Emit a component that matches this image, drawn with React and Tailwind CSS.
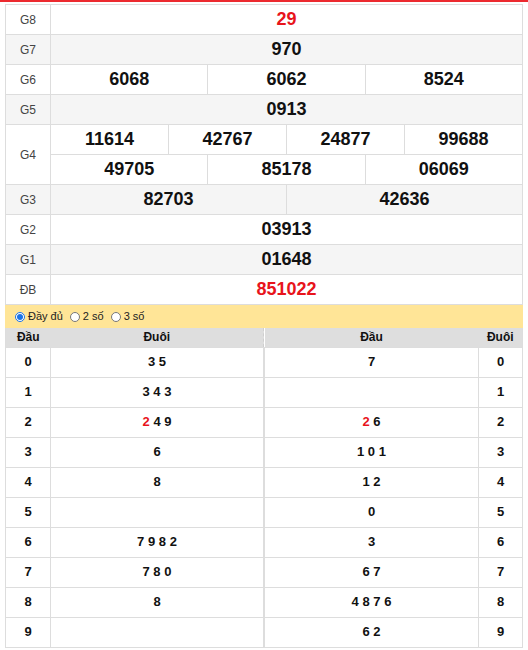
import React from "react";

const RED = "text-[#e8141b]";

function Radio({ checked, label }) {
  return (
    <label className="flex items-center gap-[3px] text-[11px] text-[#222]">
      {checked ? (
        <span className="w-[10px] h-[10px] rounded-full border border-[#1a73e8] bg-white flex items-center justify-center">
          <span className="w-[6px] h-[6px] rounded-full bg-[#1a73e8]" />
        </span>
      ) : (
        <span className="w-[10px] h-[10px] rounded-full border border-[#777] bg-white" />
      )}
      <span>{label}</span>
    </label>
  );
}

const results = [
  { label: "G8", vals: ["29"], red: true, bg: "bg-white" },
  { label: "G7", vals: ["970"], bg: "bg-[#f5f5f5]" },
  { label: "G6", vals: ["6068", "6062", "8524"], bg: "bg-white" },
  { label: "G5", vals: ["0913"], bg: "bg-[#f5f5f5]" },
];

const spanFor = (n) => (n === 1 ? 12 : n === 2 ? 6 : n === 3 ? 4 : 3);

function Cell({ children, span, red, className = "" }) {
  return (
    <td
      colSpan={span}
      className={`border border-[#dddddd] text-center font-bold text-[18px] ${red ? RED : "text-[#111]"} ${className}`}
    >
      {children}
    </td>
  );
}

function Label({ children, rowSpan }) {
  return (
    <td
      rowSpan={rowSpan}
      className="border border-[#dddddd] text-center text-[12px] text-[#444]"
    >
      {children}
    </td>
  );
}

const leftRows = [
  ["0", [["3 5"]]],
  ["1", [["3 4 3"]]],
  ["2", [["2", true], [" 4 9"]]],
  ["3", [["6"]]],
  ["4", [["8"]]],
  ["5", [[""]]],
  ["6", [["7 9 8 2"]]],
  ["7", [["7 8 0"]]],
  ["8", [["8"]]],
  ["9", [[""]]],
];

const rightRows = [
  [[["7"]], "0"],
  [[[""]], "1"],
  [[["2", true], [" 6"]], "2"],
  [[["1 0 1"]], "3"],
  [[["1 2"]], "4"],
  [[["0"]], "5"],
  [[["3"]], "6"],
  [[["6 7"]], "7"],
  [[["4 8 7 6"]], "8"],
  [[["6 2"]], "9"],
];

function Digits({ parts }) {
  return (
    <>
      {parts.map(([t, r], i) => (
        <span key={i} className={r ? RED : ""}>
          {t}
        </span>
      ))}
    </>
  );
}

export default function App() {
  return (
    <div className="w-[528px] h-[650px] bg-white font-['Liberation_Sans',Arial,sans-serif] text-[#111]">
      <div className="h-[2px] bg-[#ec2a2f]" />
      <div className="px-[5px] pt-[2px]">
        <table className="w-full table-fixed border-collapse">
          <colgroup>
            <col className="w-[45px]" />
            {Array.from({ length: 12 }).map((_, i) => (
              <col key={i} />
            ))}
          </colgroup>
          <tbody>
            {results.map((r) => (
              <tr key={r.label} className={`h-[30px] ${r.bg}`}>
                <Label>{r.label}</Label>
                {r.vals.map((v, i) => (
                  <Cell key={i} span={spanFor(r.vals.length)} red={r.red}>
                    {v}
                  </Cell>
                ))}
              </tr>
            ))}
            <tr className="h-[30px] bg-white">
              <Label rowSpan={2}>G4</Label>
              {["11614", "42767", "24877", "99688"].map((v) => (
                <Cell key={v} span={3}>
                  {v}
                </Cell>
              ))}
            </tr>
            <tr className="h-[30px] bg-white">
              {["49705", "85178", "06069"].map((v) => (
                <Cell key={v} span={4}>
                  {v}
                </Cell>
              ))}
            </tr>
            <tr className="h-[30px] bg-[#f5f5f5]">
              <Label>G3</Label>
              <Cell span={6}>82703</Cell>
              <Cell span={6}>42636</Cell>
            </tr>
            <tr className="h-[30px] bg-white">
              <Label>G2</Label>
              <Cell span={12}>03913</Cell>
            </tr>
            <tr className="h-[30px] bg-[#f5f5f5]">
              <Label>G1</Label>
              <Cell span={12}>01648</Cell>
            </tr>
            <tr className="h-[30px] bg-white">
              <Label>ĐB</Label>
              <Cell span={12} red>
                851022
              </Cell>
            </tr>
          </tbody>
        </table>

        <div className="h-[23px] bg-[#ffe597] flex items-center gap-[7px] pl-[10px]">
          <Radio checked label="Đầy đủ" />
          <Radio label="2 số" />
          <Radio label="3 số" />
        </div>

        <div className="flex">
          <table className="w-[259px] table-fixed border-collapse">
            <colgroup>
              <col className="w-[45px]" />
              <col />
            </colgroup>
            <thead>
              <tr className="h-[19px] bg-[#dedede] text-[12px] font-bold">
                <th className="border-l border-[#dddddd]">Đầu</th>
                <th className="border-r border-dashed border-[#cfcfcf]">Đuôi</th>
              </tr>
            </thead>
            <tbody>
              {leftRows.map(([d, parts]) => (
                <tr key={d} className="h-[30px] text-[13px] font-bold">
                  <td className="border border-[#dddddd] text-center">{d}</td>
                  <td className="border border-[#dddddd] text-center">
                    <Digits parts={parts} />
                  </td>
                </tr>
              ))}
            </tbody>
          </table>
          <table className="flex-1 table-fixed border-collapse">
            <colgroup>
              <col />
              <col className="w-[44px]" />
            </colgroup>
            <thead>
              <tr className="h-[19px] bg-[#dedede] text-[12px] font-bold">
                <th>Đầu</th>
                <th className="border-r border-[#dddddd]">Đuôi</th>
              </tr>
            </thead>
            <tbody>
              {rightRows.map(([parts, d]) => (
                <tr key={d} className="h-[30px] text-[13px] font-bold">
                  <td className="border border-[#dddddd] text-center">
                    <Digits parts={parts} />
                  </td>
                  <td className="border border-[#dddddd] text-center">{d}</td>
                </tr>
              ))}
            </tbody>
          </table>
        </div>
      </div>
    </div>
  );
}
